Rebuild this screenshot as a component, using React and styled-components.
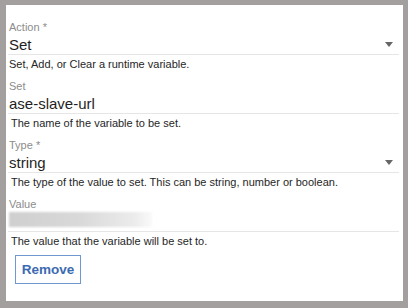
import React from "react";
import styled, { createGlobalStyle } from "styled-components";

const Global = createGlobalStyle`
  html, body { margin: 0; padding: 0; background: #a39f9f; }
  body { font-family: "Liberation Sans", Arial, Helvetica, sans-serif; }
  #root { padding: 5px 5px 7px 6px; }
`;

const Panel = styled.div`
  background: #fff;
  height: 296px;
  box-sizing: border-box;
  padding: 15px 4px 0 2px;
  display: flex;
  flex-direction: column;
`;

const Field = styled.div`
  display: flex;
  flex-direction: column;
  margin-bottom: ${(p) => (p.$last ? "7px" : "8px")};
`;

const Label = styled.div`
  font-size: 11px;
  line-height: 14px;
  color: #8c8c8c;
  padding-left: 1px;
`;

const InputRow = styled.div`
  display: flex;
  align-items: ${(p) => (p.$top ? "flex-start" : "center")};
  justify-content: space-between;
  height: 20px;
  border-bottom: 1px solid #e6e6e6;
  padding-left: 1px;
  padding-right: 6px;
`;

const Value = styled.span`
  font-size: 15px;
  color: #1f1f1f;
`;

const Blurred = styled.div`
  width: 143px;
  height: 15px;
  margin-top: 1px;
  background: linear-gradient(to right, #cfcfcf, #d9d9d9 50%, #ececec 88%, #fafafa);
  filter: blur(0.8px);
`;

const Caret = styled.svg`
  width: 8px;
  height: 5px;
  display: block;
`;

const Helper = styled.div`
  font-size: 11px;
  line-height: 14px;
  margin-top: 2px;
  color: #262626;
  padding-left: ${(p) => (p.$first ? "1px" : "3px")};
`;

const Button = styled.button`
  align-self: flex-start;
  margin-left: 7px;
  width: 66px;
  height: 29px;
  background: #fff;
  border: 1px solid #7097d0;
  color: #3c6ab2;
  font-family: "Liberation Sans", Arial, Helvetica, sans-serif;
  font-weight: bold;
  font-size: 13.5px;
  padding: 0;
`;

const Arrow = () => (
  <Caret viewBox="0 0 8 5">
    <path d="M0 0 H8 L4 5 Z" fill="#666" />
  </Caret>
);

export default function App() {
  return (
    <>
      <Global />
      <Panel>
        <Field>
          <Label>Action *</Label>
          <InputRow>
            <Value>Set</Value>
            <Arrow />
          </InputRow>
          <Helper $first>Set, Add, or Clear a runtime variable.</Helper>
        </Field>
        <Field>
          <Label>Set</Label>
          <InputRow>
            <Value>ase-slave-url</Value>
          </InputRow>
          <Helper>The name of the variable to be set.</Helper>
        </Field>
        <Field>
          <Label>Type *</Label>
          <InputRow>
            <Value>string</Value>
            <Arrow />
          </InputRow>
          <Helper>The type of the value to set. This can be string, number or boolean.</Helper>
        </Field>
        <Field $last>
          <Label>Value</Label>
          <InputRow $top>
            <Blurred />
          </InputRow>
          <Helper>The value that the variable will be set to.</Helper>
        </Field>
        <Button>Remove</Button>
      </Panel>
    </>
  );
}
